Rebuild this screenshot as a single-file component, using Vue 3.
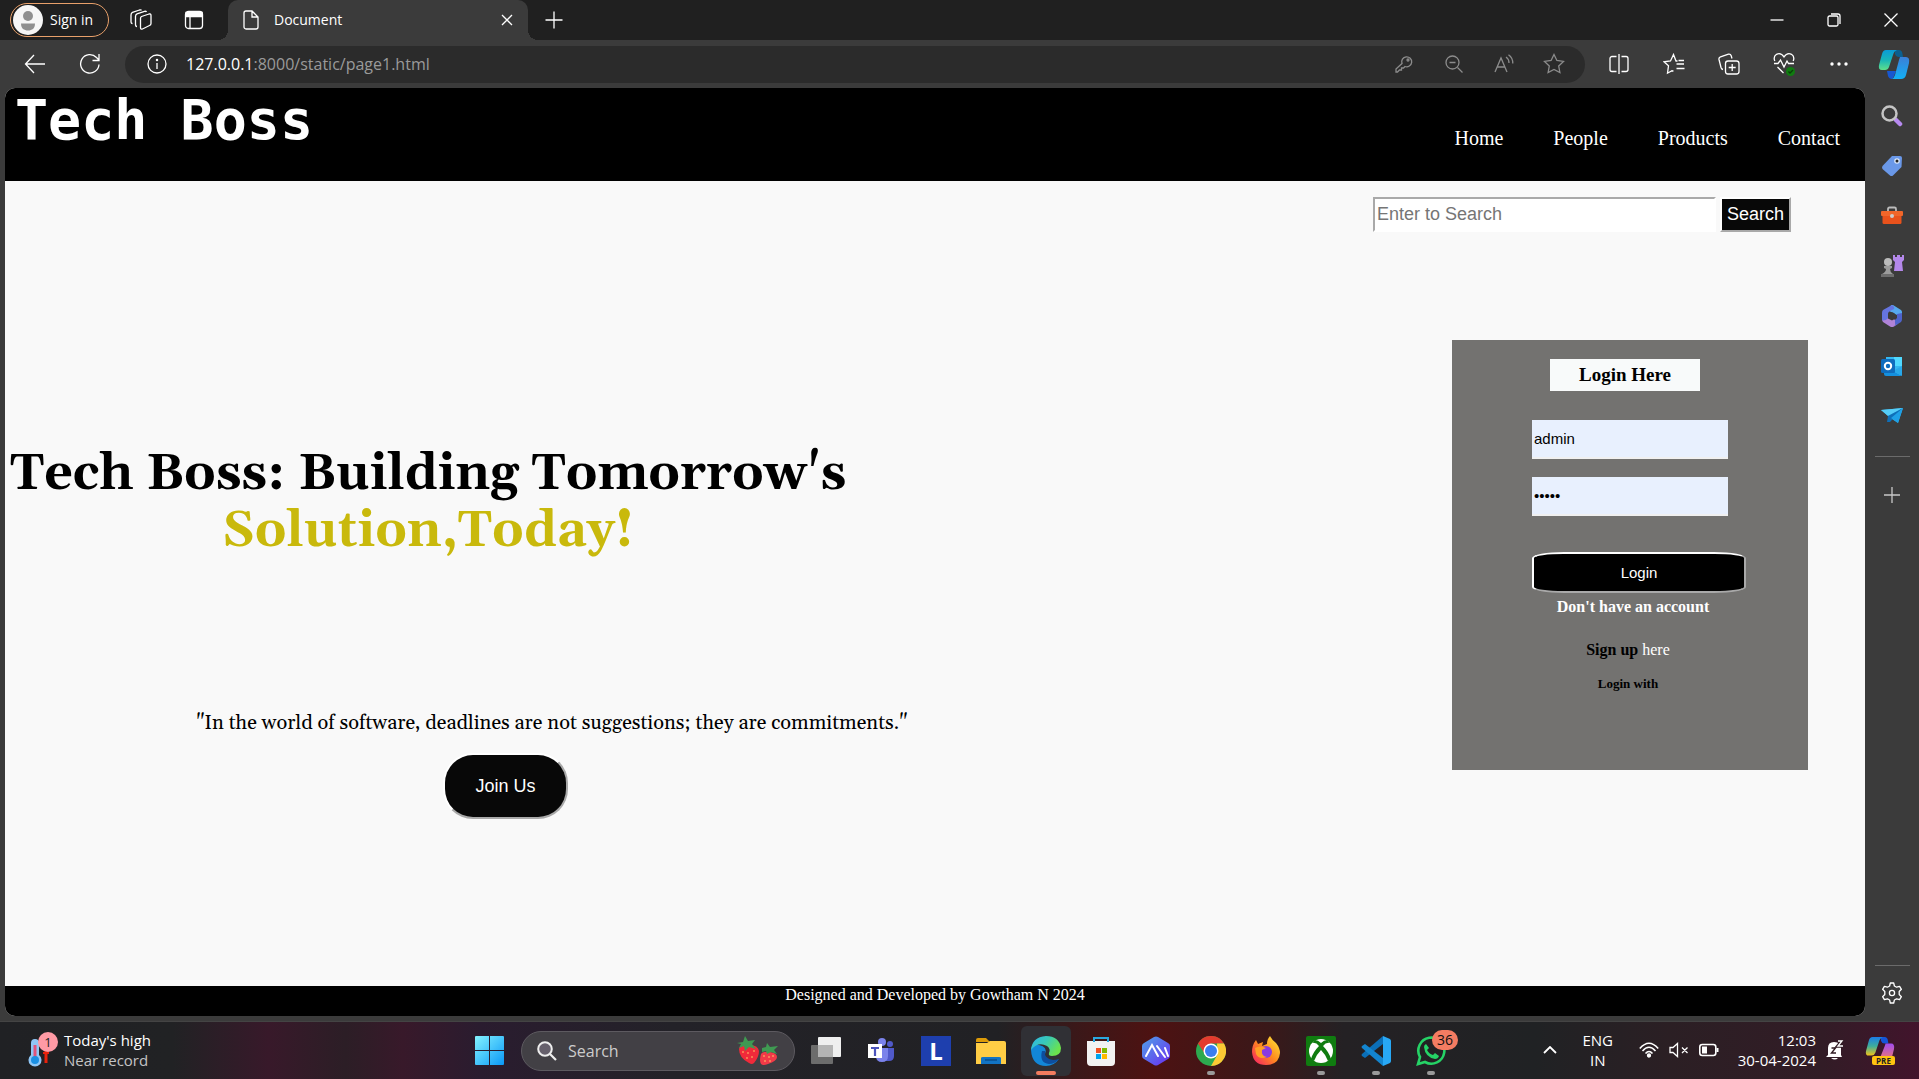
<script setup>
import { ref } from 'vue'

const query = ref('')
const username = ref('admin')
const password = ref('admin')
const links = ['Home', 'People', 'Products', 'Contact']
</script>

<template>
  <div class="desktop">
    <div class="tabstrip">
      <button class="profile" type="button">
        <svg width="30" height="30" viewBox="0 0 30 30"><circle cx="15" cy="15" r="15" fill="#f6f6f6" /><circle cx="15" cy="11" r="5" fill="#8f8f8f" /><path d="M8 18.500h14c0 5-3 7-7 7s-7-2-7-7z" fill="#8f8f8f" /></svg>
        <span>Sign in</span>
      </button>
      <button class="icon" type="button" aria-label="Workspaces">
        <svg width="22" height="22" viewBox="0 0 22 22" class="line"><path d="M11.500 7.500l7.500-2.500q2-.5 2 1.500v8q0 1.500-1.500 2l-7 3.500q-2 .8-2-1.500V9.500q0-1.500 1-2z" /><path d="M7 17.500q-1.500 0-1.500-2V7.500q0-2 1.500-2.700l7.500-2.500q1.500-.3 2 .7" /><path d="M2.500 14.500Q1 14.500 1 12.500V6Q1 4 2.500 3.300L9.500 1q1.500-.4 2 .4" /></svg>
      </button>
      <button class="icon" type="button" aria-label="Tab actions">
        <svg width="20" height="20" viewBox="0 0 20 20" class="line"><rect x="1.500" y="1.500" width="17" height="17" rx="3" /><path d="M2 2.500h16v4H2z" fill="#fff" /><path d="M6 6v12" /></svg>
      </button>
      <div class="tab">
        <svg width="16" height="20" viewBox="0 0 16 20" class="line"><path d="M1 3a2 2 0 0 1 2-2h6l6 6v10a2 2 0 0 1-2 2H3a2 2 0 0 1-2-2zM9 1v6h6" /></svg>
        <span class="tab-title">Document</span>
        <button class="close-tab" type="button" aria-label="Close tab">
          <svg width="12" height="12" viewBox="0 0 12 12" class="line"><path d="M1 1l10 10M11 1L1 11" /></svg>
        </button>
      </div>
      <button class="icon new-tab" type="button" aria-label="New tab">
        <svg width="18" height="18" viewBox="0 0 18 18" class="line"><path d="M9 .5v17M.5 9h17" /></svg>
      </button>
      <div class="window-buttons">
        <button type="button" aria-label="Minimize"><svg width="14" height="14" viewBox="0 0 14 14" class="line"><path d="M.5 7h13" /></svg></button>
        <button type="button" aria-label="Restore"><svg width="14" height="14" viewBox="0 0 14 14" class="line"><rect x="1" y="3" width="10" height="10" rx="1.500" /><path d="M4 1h7a2 2 0 0 1 2 2v8" /></svg></button>
        <button type="button" aria-label="Close"><svg width="14" height="14" viewBox="0 0 14 14" class="line"><path d="M.5 .5l13 13M13.500 .5l-13 13" /></svg></button>
      </div>
    </div>

    <div class="toolbar">
      <button class="icon" type="button" aria-label="Back">
        <svg width="22" height="20" viewBox="0 0 22 20" class="line"><path d="M21 10H2M10 1L1.500 10 10 19" /></svg>
      </button>
      <button class="icon reload" type="button" aria-label="Reload">
        <svg width="22" height="22" viewBox="0 0 22 22" class="line"><path d="M20 11.500A9.200 9.200 0 1 1 17.500 4.500L20 7M20 1v6.500h-6.500" /></svg>
      </button>
      <div class="address">
        <button class="icon" type="button" aria-label="Site information">
          <svg width="20" height="20" viewBox="0 0 20 20" class="line"><circle cx="10" cy="10" r="9" /><path d="M10 9v6" /><circle cx="10" cy="6" r=".6" fill="#fff" /></svg>
        </button>
        <span class="url"><b>127.0.0.1</b>:8000/static/page1.html</span>
        <div class="address-icons">
          <button class="icon" type="button" aria-label="Passwords"><svg width="18" height="18" viewBox="0 0 18 18" class="line"><path d="M7 8.500a5 5 0 1 1 3 3L8.500 13H6.500v2H4.500l-2 2H1v-3z" /><circle cx="13" cy="5" r="1" /></svg></button>
          <button class="icon" type="button" aria-label="Zoom out"><svg width="18" height="18" viewBox="0 0 18 18" class="line"><circle cx="7.500" cy="7.500" r="6.500" /><path d="M12.500 12.500l5 5M4.500 7.500h6" /></svg></button>
          <button class="icon" type="button" aria-label="Read aloud"><svg width="20" height="20" viewBox="0 0 20 20" class="line"><path d="M1 18L7 4l6 14M3.200 13h7.600M12 3q3 2 3 6M14.500 .8Q19 4 18.800 9.500" /></svg></button>
          <button class="icon" type="button" aria-label="Add to favorites"><svg width="22" height="22" viewBox="0 0 22 22" class="line"><path d="M11 1.500l2.900 6 6.600.9-4.800 4.600 1.200 6.500-5.900-3.100-5.900 3.100 1.200-6.500L1.500 8.400l6.600-.9z" /></svg></button>
        </div>
      </div>
      <div class="toolbar-icons">
        <button class="icon" type="button" aria-label="Split screen"><svg width="20" height="20" viewBox="0 0 20 20" class="line"><path d="M7.500 2.500H3a2 2 0 0 0-2 2v11a2 2 0 0 0 2 2h4.500M12.500 2.500H17a2 2 0 0 1 2 2v11a2 2 0 0 1-2 2h-4.500M10 0v20" /></svg></button>
        <button class="icon" type="button" aria-label="Favorites"><svg width="22" height="22" viewBox="0 0 22 22" class="line"><path d="M14.500 8h-1.500L10.500 1.500 7.500 8 1 8.800l4.500 4-1 7.400 4.500-2.400 1.500.4M13.500 11l7.500 0M15.500 7.500H21M13.500 15.500h8" /></svg></button>
        <button class="icon" type="button" aria-label="Collections"><svg width="22" height="22" viewBox="0 0 22 22" class="line"><rect x="7.500" y="8" width="13.500" height="13" rx="2.500" /><path d="M14.200 11v7M10.700 14.500h7M5 16.500q-1.500-.3-2-2L1 6.500q-.4-2 1.500-2.700L10.500 1.200q2-.4 2.700 1.500l.8 2.800" /></svg></button>
        <button class="icon" type="button" aria-label="Browser essentials"><svg width="22" height="24" viewBox="0 0 22 24" class="line"><path d="M1.800 9Q0 4.500 3.500 2.300 8 .3 11 5q3-4.700 7.500-2.700Q22 4.500 20.200 9M1 11.500h4L7.500 8l3.500 7 3-6 1.500 2.500H21M4.500 15l6 6" /><circle cx="17.500" cy="19.500" r="4.500" fill="#107c10" stroke="none" /><path d="M15.500 19.500l1.500 1.500 3-3" stroke="#093e09" /></svg></button>
        <button class="icon" type="button" aria-label="Settings and more"><svg width="18" height="6" viewBox="0 0 18 6" fill="#fff"><circle cx="2" cy="3" r="1.700" /><circle cx="9" cy="3" r="1.700" /><circle cx="16" cy="3" r="1.700" /></svg></button>
        <button class="icon" type="button" aria-label="Copilot">
          <svg width="32" height="30" viewBox="0 0 32 30">
            <defs>
              <linearGradient id="cop-a" x1="0" y1="0" x2="0" y2="1"><stop offset="0" stop-color="#0a9bd8" /><stop offset=".5" stop-color="#18b5b8" /><stop offset="1" stop-color="#5fe08a" /></linearGradient>
              <linearGradient id="cop-b" x1="0" y1="0" x2="0" y2="1"><stop offset="0" stop-color="#3c7fd6" /><stop offset="1" stop-color="#12b0f5" /></linearGradient>
            </defs>
            <path d="M17 1h4q3 0 3.500 4l.5 3h-4q-3 0-4-3z" fill="#0b5f8f" />
            <path d="M9 22h9l-2 5q-1 3-2 3-3 0-4-3z" fill="#1857d0" />
            <path d="M8 1h11q-3 1-4 5l-4 12q-1 3-4 3H4q-4 0-3-5L4 5q1-4 4-4z" fill="url(#cop-a)" />
            <path d="M22 8h6q4 0 3 6l-3 12q-1 4-5 4h-9q2-1 3-4l4-15z" fill="url(#cop-b)" />
          </svg>
        </button>
      </div>
    </div>

    <div class="browser">
      <div class="page">
        <header class="site-header">
          <h1>Tech Boss</h1>
          <nav>
            <a v-for="link in links" :key="link" href="#">{{ link }}</a>
          </nav>
        </header>
        <main>
          <form class="search" @submit.prevent>
            <input v-model="query" type="text" placeholder="Enter to Search" aria-label="Search">
            <button type="submit">Search</button>
          </form>
          <div class="content">
            <section class="hero">
              <h2>Tech Boss: Building Tomorrow's<br><span>Solution,Today!</span></h2>
              <p>"In the world of software, deadlines are not suggestions; they are commitments."</p>
              <button type="button">Join Us</button>
            </section>
            <form class="login" @submit.prevent>
              <h3>Login Here</h3>
              <div class="fields">
                <input v-model="username" type="text" aria-label="Username">
                <input v-model="password" type="password" aria-label="Password">
                <button type="submit">Login</button>
              </div>
              <p class="no-account">Don't have an account</p>
              <p class="signup"><b>Sign up</b> <a href="#">here</a></p>
              <p class="with">Login with</p>
            </form>
          </div>
        </main>
        <footer>Designed and Developed by Gowtham N 2024</footer>
      </div>

      <aside class="sidebar">
        <button type="button" aria-label="Search"><svg width="22" height="22" viewBox="0 0 22 22"><path d="M15 15l4 4" stroke="#b78af0" stroke-width="4.500" stroke-linecap="round" /><circle cx="8.500" cy="8.500" r="7" fill="none" stroke="#c4c4c4" stroke-width="2.500" /></svg></button>
        <button type="button" aria-label="Shopping"><svg width="22" height="22" viewBox="0 0 22 22"><path d="M11 1h8q2 0 2 2l-.5 9L12 20.500q-1.500 1-3 0L1.500 14q-1-1.500 0-3z" fill="#6a98e8" /><circle cx="16" cy="6" r="2.800" fill="#dbe8fb" /><circle cx="16" cy="6" r="1.500" fill="#222" /></svg></button>
        <button type="button" aria-label="Tools"><svg width="22" height="20" viewBox="0 0 22 20"><path d="M7 6V3q0-1.500 1.500-1.500h5Q15 1.500 15 3v3" fill="none" stroke="#bbb" stroke-width="1.800" /><rect x="1.500" y="8" width="19" height="10" rx="1.500" fill="#e8521c" /><rect y="5" width="22" height="5" rx="1" fill="#f0662a" /><circle cx="11" cy="10" r="2" fill="#ccc" /></svg></button>
        <button type="button" aria-label="Games"><svg width="24" height="24" viewBox="0 0 24 24"><path d="M13 1h2v2h2V1h3v2h2V1h2v5l-2 2 1 9h-9l1-9-2-2z" fill="#b488ea" /><circle cx="8" cy="8" r="4" fill="#bbb" /><path d="M4 12h8v2l-2 1q0 3 3 5v3H2v-3q4-2 4-5l-2-1z" fill="#9b9b9b" /><path d="M1 20h13v3H1z" fill="#6d6d6d" /></svg></button>
        <button type="button" aria-label="Microsoft 365"><svg width="22" height="22" viewBox="0 0 22 22"><path d="M10 0h2l8 5q1 1 1 2v7l-5-4-8-4z" fill="#56a9ee" /><path d="M11 0L2 5Q1 6 1 8v7q1 2 3 1l3-2V9q0-2 2-3l4-2q1-2-2-4z" fill="#6574e0" /><path d="M1 14q0 2 1 3l7 4.500q2 1 4 0l3-2q2-2 0-4l-8-3q-3 3-6 3-1 0-1-1.500z" fill="#b083d8" /><path d="M21 8v6q0 2-1 3l-7 4.500q2-1.500 1-4V15l2-2V9z" fill="#4f63cc" /><path d="M9 7q5 0 6 4v2l-4 2.500-4-2V9z" fill="#3b3b3b" /></svg></button>
        <button type="button" aria-label="Outlook"><svg width="22" height="22" viewBox="0 0 22 22"><path d="M5 2h16v18H5z" fill="#35b8f1" /><path d="M13 2h8v9h-8z" fill="#50d9ff" /><path d="M3 11l18 10H5q-2 0-2-2z" fill="#1490df" /><path d="M12 16l9-5v10z" fill="#28a8ea" /><rect y="4" width="14" height="14" rx="1.500" fill="#0f6cbd" /><circle cx="7" cy="11" r="3.200" fill="none" stroke="#fff" stroke-width="2" /></svg></button>
        <button type="button" aria-label="Drop"><svg width="22" height="18" viewBox="0 0 22 18"><path d="M0 3l22-2-5 15-6-4z" fill="#2bb3f0" /><path d="M0 3l22-2L7 9z" fill="#55cdf7" /><path d="M7 9l15-8L9 15H6z" fill="#0f6fb8" /><path d="M10 11L22 1l-5 15z" fill="#1ea0e6" /></svg></button>
        <hr>
        <button type="button" aria-label="Customize"><svg width="16" height="16" viewBox="0 0 16 16" class="line"><path d="M8 0v16M0 8h16" stroke="#c8c8c8" /></svg></button>
        <hr class="bottom">
        <button type="button" aria-label="Settings"><svg width="22" height="22" viewBox="0 0 22 22" class="line"><circle cx="11" cy="11" r="2.600" /><path d="M9.300 1h3.400l.7 3 2.200 1.200 3-.9 1.800 3-2.200 2.200v3l2.200 2.200-1.800 3-3-.9-2.200 1.200-.7 3H9.300l-.7-3-2.200-1.200-3 .9-1.800-3 2.200-2.200v-3L1.600 7.300l1.800-3 3 .9L8.600 4z" stroke-linejoin="round" /></svg></button>
      </aside>
    </div>

    <div class="taskbar">
      <button class="weather" type="button">
        <svg width="32" height="36" viewBox="0 0 32 36">
          <path d="M18 19v12" stroke="#e8220c" stroke-width="3" /><path d="M15 21h6" stroke="#e8220c" stroke-width="2" />
          <path d="M3 11a4 4 0 0 1 8 0v12a6.500 6.500 0 1 1-8 0z" fill="#8fc6f5" /><path d="M7 13v14" stroke="#e0527a" stroke-width="3" /><circle cx="7" cy="28" r="4" fill="#1a8fe3" />
          <circle cx="20" cy="10" r="10" fill="#ff9aa5" />
          <text x="20" y="15" font-size="13" text-anchor="middle" fill="#222">1</text>
        </svg>
        <span class="two-line">Today's high<br><i>Near record</i></span>
      </button>
      <div class="apps">
        <button class="start" type="button" aria-label="Start">
          <svg width="29" height="29" viewBox="0 0 29 29"><defs><linearGradient id="win" x1="0" y1="0" x2="1" y2="1"><stop offset="0" stop-color="#84f3ff" /><stop offset="1" stop-color="#0a98f7" /></linearGradient></defs><path d="M0 1q0-1 1-1h13v14H0zM15 0h13q1 0 1 1v13H15zM0 15h14v14H1q-1 0-1-1zM15 15h14v13q0 1-1 1H15z" fill="url(#win)" /></svg>
        </button>
        <button class="task-search" type="button">
          <svg width="20" height="20" viewBox="0 0 20 20"><circle cx="8" cy="8" r="6.800" fill="#66606c" stroke="#eee" stroke-width="2" /><path d="M13 13l6 6" stroke="#eee" stroke-width="2.200" /></svg>
          <span>Search</span>
          <svg class="berries" width="42" height="30" viewBox="0 0 42 30">
            <path d="M2 13q0-4 8-4 11-1 12 6 0 6-5 12-2 2-5 0Q2 22 2 13z" fill="#f02a3a" /><path d="M24 18q2-3 9-2 7 1 7 5 0 4-9 7-5 2-7 0-2-3 0-10z" fill="#f23a48" />
            <path d="M0 7l6-1 2-6 3 5 7-1-3 4 4 5-7-2-4 4-1-5-5 2 2-4zM25 12l4-1 1-4 3 4 8-1-4 4 3 4-6-2-4 2-1-3-4 1z" fill="#3f9a52" />
            <g fill="#ffd56a"><circle cx="6" cy="16" r=".8" /><circle cx="11" cy="17" r=".8" /><circle cx="17" cy="15" r=".8" /><circle cx="10" cy="22" r=".8" /><circle cx="15" cy="21" r=".8" /><circle cx="27" cy="20" r=".8" /><circle cx="32" cy="21" r=".8" /><circle cx="36" cy="20" r=".8" /><circle cx="28" cy="25" r=".8" /><circle cx="33" cy="25" r=".8" /></g>
          </svg>
        </button>
        <button class="app" type="button" aria-label="Task view"><svg width="30" height="30" viewBox="0 0 30 30"><rect y="9" width="22" height="19" rx="1" fill="#6c6c6c" /><rect x="7" y="1" width="23" height="20" rx="1" fill="#efefef" /><path d="M7 9h15v12H7z" fill="#b4b4b4" /></svg></button>
        <button class="app" type="button" aria-label="Teams"><svg width="30" height="30" viewBox="0 0 30 30"><circle cx="16" cy="6" r="4" fill="#7b83eb" /><circle cx="24" cy="8" r="3" fill="#5059c9" /><path d="M20 12h8v8q0 5-5 5h-3z" fill="#5059c9" /><path d="M10 12h12v8q0 6-6 6t-6-6z" fill="#7b83eb" /><rect x="2" y="8" width="14" height="14" fill="#fff" /><path d="M5 12h8M9 12v8" stroke="#4b53bc" stroke-width="2.200" /></svg></button>
        <button class="app" type="button" aria-label="L"><span class="letter">L</span></button>
        <button class="app" type="button" aria-label="File Explorer"><svg width="30" height="30" viewBox="0 0 30 30"><path d="M0 4q0-2 2-2h8l4 4H0z" fill="#dd9b08" /><path d="M0 7h11l3-2h14q2 0 2 2v21H0z" fill="#ffcd45" /><path d="M5 28v-6q0-1 2-1h16q2 0 2 1v6z" fill="#1274c4" /><path d="M9 24h12" stroke="#0a4f8e" stroke-width="1.500" /></svg></button>
        <button class="app active" type="button" aria-label="Edge">
          <svg width="30" height="30" viewBox="0 0 30 30">
            <defs><linearGradient id="edge-a" x1="0" y1="0" x2="1" y2=".5"><stop offset="0" stop-color="#2fb6e8" /><stop offset=".5" stop-color="#38c9b8" /><stop offset="1" stop-color="#6be34d" /></linearGradient></defs>
            <path d="M0 14Q1 6 8 9q9 2 6 9-2 5 5 8 5 1 9-3-5 7-13 7Q1 30 0 14z" fill="#1287d8" />
            <path d="M11 15q-3 12 7 13 6 0 10-5-3 1-6 1-9-1-8-9z" fill="#0d4e9e" />
            <path d="M0 14Q1 1 15 0q13 0 15 12 0 8-9 8-4 0-3-3 2-4-2-7Q7 5 0 14z" fill="url(#edge-a)" />
          </svg>
        </button>
        <button class="app" type="button" aria-label="Microsoft Store"><svg width="30" height="30" viewBox="0 0 30 30"><path d="M1 5h28v21q0 4-4 4H5q-4 0-4-4z" fill="#f2f2f2" /><path d="M8 6V2h14v4" fill="none" stroke="#2aa9e0" stroke-width="2" /><path d="M10 12h5v5h-5z" fill="#f25022" /><path d="M16 12h5v5h-5z" fill="#7fba00" /><path d="M10 18h5v5h-5z" fill="#00a4ef" /><path d="M16 18h5v5h-5z" fill="#ffb900" /></svg></button>
        <button class="app" type="button" aria-label="AI"><svg width="30" height="30" viewBox="0 0 30 30"><defs><linearGradient id="hex" x1="0" y1="0" x2="1" y2="1"><stop offset="0" stop-color="#4ea3e8" /><stop offset="1" stop-color="#6a2cf0" /></linearGradient></defs><path d="M13 1q2-1 4 0l10 6q2 1 2 3v10q0 2-2 3l-10 6q-2 1-4 0L3 23q-2-1-2-3V10q0-2 2-3z" fill="url(#hex)" /><path d="M5 20l6-11 6 11M16 10l8 11M24 12l3 8" fill="none" stroke="#fff" stroke-width="2" stroke-linecap="round" /></svg></button>
        <button class="app running" type="button" aria-label="Chrome"><svg width="30" height="30" viewBox="0 0 30 30"><circle cx="15" cy="15" r="15" fill="#2da94f" /><path d="M2 7.500A15 15 0 0 1 28 7.500H15L9 18z" fill="#e33b2e" /><path d="M28 7.500A15 15 0 0 1 15 30l6.500-11.500L21 7.500z" fill="#fcc934" /><circle cx="15" cy="15" r="7.500" fill="#fff" /><circle cx="15" cy="15" r="6" fill="#3a7df0" /></svg></button>
        <button class="app" type="button" aria-label="Firefox"><svg width="30" height="30" viewBox="0 0 30 30"><defs><linearGradient id="fox" x1="1" y1="0" x2="0" y2="1"><stop offset="0" stop-color="#fff13a" /><stop offset=".5" stop-color="#ff8a1e" /><stop offset="1" stop-color="#f5156c" /></linearGradient></defs><path d="M19 0q2 4 6 7 4 5 4 10-1 12-14 12T1 16q0-7 4-12l2 4 5-2-1 4 5-2q0-5 3-8z" fill="url(#fox)" /><circle cx="15" cy="16" r="6" fill="#8a3be0" /><path d="M4 12q5-3 11 0l-4 2q-1 6 5 7-8 3-11-3z" fill="#ffa025" /></svg></button>
        <button class="app running" type="button" aria-label="Xbox"><svg width="30" height="30" viewBox="0 0 30 30"><rect width="30" height="30" rx="2" fill="#107c10" /><circle cx="15" cy="15" r="12" fill="#fff" /><path d="M9 4q3 0 6 3 3-3 6-3l3 3q-4-1-7 3 6 6 8 13l-3 2q-2-6-7-11-5 5-7 11l-3-2q2-7 8-13-3-4-7-3z" fill="#107c10" /></svg></button>
        <button class="app running" type="button" aria-label="Visual Studio Code"><svg width="30" height="30" viewBox="0 0 30 30"><path d="M22 8L4 22l-3-2q-1-1 0-2L22 0z" fill="#0b6fb8" /><path d="M22 22L4 8l-3 2q-1 1 0 2l21 18z" fill="#1385cf" /><path d="M22 0l7 3q1 1 1 2v20q0 1-1 2l-7 3z" fill="#28a8f5" /></svg></button>
        <button class="app running" type="button" aria-label="WhatsApp, 36 unread">
          <svg width="30" height="30" viewBox="0 0 30 30"><path d="M2 28l2-7A13 13 0 1 1 9 26z" fill="none" stroke="#25d366" stroke-width="2.600" /><path d="M10 8l3 4-2 2q2 4 6 5l2-2 4 3q-1 3-4 3Q9 21 8 11q0-2 2-3z" fill="#25d366" /></svg>
          <span class="badge">36</span>
        </button>
      </div>
      <div class="tray">
        <button class="caret" type="button" aria-label="Show hidden icons"><svg width="14" height="8" viewBox="0 0 14 8" class="line"><path d="M1 7l6-6 6 6" stroke-width="1.800" /></svg></button>
        <button class="lang" type="button">ENG<br>IN</button>
        <button class="status" type="button" aria-label="Network, volume and battery">
          <svg width="20" height="16" viewBox="0 0 20 16" class="line"><path d="M.8 6.500Q10-4 19.200 6.500M3.500 9Q10 1.500 16.500 9M6.500 11.500q3.500-4 7 0" stroke-width="1.600" /><circle cx="10" cy="13.500" r="1.500" fill="#fff" /></svg>
          <svg width="20" height="16" viewBox="0 0 20 16" class="line"><path d="M1 5.500h3L8.500 1.500v13L4 10.500H1zM13 5.500l5.500 5.500M18.500 5.500L13 11" /></svg>
          <svg width="20" height="16" viewBox="0 0 20 16" class="line"><rect x=".8" y="2.500" width="16" height="11" rx="2.500" stroke-width="1.600" /><path d="M3 4.500h5v7H3z" fill="#fff" stroke="none" /><path d="M18.500 6v4" stroke-width="2" /></svg>
        </button>
        <button class="clock" type="button">12:03<br>30-04-2024</button>
        <button class="bell" type="button" aria-label="Notifications"><svg width="18" height="20" viewBox="0 0 18 20"><path d="M2 15V8q0-6 6-6 7 0 7 6v7l1 2H0zM5 18h7q-3 3-7 0z" fill="#fff" /><path d="M5.500 8h4l-4 5h4.500" fill="none" stroke="#321c24" stroke-width="1.400" /><path d="M12 1h4l-4 5h5" fill="none" stroke="#321c24" stroke-width="3.600" /><path d="M12 1h4l-4 5h5" fill="none" stroke="#fff" stroke-width="1.300" /></svg></button>
        <button class="copilot" type="button" aria-label="Copilot preview">
          <svg width="30" height="28" viewBox="0 0 32 30"><defs><linearGradient id="pre-a" x1="0" y1="0" x2="0" y2="1"><stop offset="0" stop-color="#1b7de8" /><stop offset=".5" stop-color="#3fae9a" /><stop offset="1" stop-color="#f2c318" /></linearGradient><linearGradient id="pre-b" x1="0" y1="0" x2="0" y2="1"><stop offset="0" stop-color="#a04bf0" /><stop offset="1" stop-color="#f47a6a" /></linearGradient></defs><path d="M17 1h4q3 0 3.500 4l.5 3h-4q-3 0-4-3z" fill="#1555d8" /><path d="M8 1h11q-3 1-4 5l-4 12q-1 3-4 3H4q-4 0-3-5L4 5q1-4 4-4z" fill="url(#pre-a)" /><path d="M22 8h6q4 0 3 6l-3 12H15l6-15z" fill="url(#pre-b)" /></svg>
          <span class="pre">PRE</span>
        </button>
      </div>
    </div>
  </div>
</template>

<style>
body { margin: 0; background: #3b3b3b; }
</style>

<style scoped>
* { box-sizing: border-box; }
.desktop {
  display: flex;
  flex-direction: column;
  min-height: 100vh;
  background: #3b3b3b;
  color: #fff;
  font-family: "Segoe UI", "Open Sans", "Noto Sans", sans-serif;
  font-size: 14px;
}
button { font: inherit; color: inherit; background: none; border: 0; padding: 0; }
svg { display: block; flex: none; }
.line { fill: none; stroke: #fff; stroke-width: 1.300; }
.icon { display: flex; align-items: center; justify-content: center; width: 40px; height: 36px; flex: none; }

.tabstrip { display: flex; align-items: center; height: 40px; background: #202020; padding-left: 10px; }
.profile { display: flex; align-items: center; gap: 7px; width: 99px; height: 34px; padding-left: 2px; margin-right: 12px; border: 1px solid #e8a06a; border-radius: 17px; }
.profile span, .tab-title { padding-bottom: 2px; }
.profile + .icon { margin-right: 13px; }
.tab { position: relative; display: flex; align-items: center; width: 300px; height: 40px; margin-left: 14px; padding: 0 15px; gap: 15px; background: #3b3b3b; border-radius: 10px 10px 0 0; }
.tab::before, .tab::after { content: ""; position: absolute; bottom: 0; width: 10px; height: 10px; }
.tab::before { right: 100%; background: radial-gradient(circle at 0 0, #202020 10px, #3b3b3b 10px); }
.tab::after { left: 100%; background: radial-gradient(circle at 100% 0, #202020 10px, #3b3b3b 10px); }
.tab-title { flex: 1; }
.new-tab { margin-left: 6px; }
.window-buttons { display: flex; margin-left: auto; }
.window-buttons button { display: flex; align-items: center; justify-content: center; width: 57px; height: 40px; }

.toolbar { display: flex; align-items: center; height: 48px; padding: 0 5px 0 15px; }
.reload { margin-left: 15px; }
.address { flex: 1; display: flex; align-items: center; height: 37px; margin: 0 14px 0 15px; padding: 0 11px 0 12px; border-radius: 19px; background: #2b2b2b; }
.url { margin-left: 9px; flex: 1; font-size: 16px; color: #9a9a9a; }
.url b { color: #fff; font-weight: 400; }
.address-icons { display: flex; gap: 10px; }
.address-icons .line { stroke: #8c8c8c; }
.toolbar-icons { display: flex; gap: 15px; }

.browser { flex: 1; display: flex; }
.page { flex: 1; display: flex; flex-direction: column; margin: 0 0 5px 5px; overflow: hidden; border-radius: 10px; background: #f9f9f9; color: #000; font-family: "Liberation Serif", serif; }
.site-header { display: flex; justify-content: space-between; height: 93px; padding: 0 25px 0 10px; background: #000; color: #fff; }
.site-header h1 { margin: 0; font: bold 55px/64px "DejaVu Sans Mono", monospace; }
nav { display: flex; gap: 50px; padding-top: 38px; font-size: 20px; line-height: 24px; }
nav a { color: #fff; text-decoration: none; }
main { flex: 1; }
.search { display: flex; justify-content: flex-end; gap: 4px; padding: 16px 74px 0 0; }
.search input { width: 343px; height: 35px; padding: 0 2px; border: 2px solid; border-color: #a9a9a9 #fff #fff #a9a9a9; border-radius: 0; background: #fff; font: 18px "Liberation Sans", sans-serif; }
.search input::placeholder { color: #757575; }
.search button { width: 71px; height: 35px; border: 2px solid; border-color: #fff #a9a9a9 #a9a9a9 #fff; background: #080808; color: #fff; font: 18px "Liberation Sans", sans-serif; }
.content { display: flex; justify-content: space-between; align-items: flex-start; padding: 108px 57px 60px 5px; }
.hero { display: flex; flex-direction: column; align-items: flex-start; padding-top: 106px; }
.hero h2 { margin: 0; font: bold 50px/57px Georgia, Gelasio, "Liberation Serif", serif; text-align: center; }
.hero h2 span { color: #c9b90c; }
.hero p { margin: 151px 0 18px 186px; font: 20px/24px Georgia, Gelasio, "Liberation Serif", serif; }
.hero button { margin-left: 433px; width: 125px; height: 66px; border: 2px solid; border-color: #fff #a9a9a9 #a9a9a9 #fff; border-radius: 30px; background: #080808; color: #fff; font: 18px "Liberation Sans", sans-serif; }
.login { display: flex; flex-direction: column; align-items: center; width: 356px; height: 430px; padding-top: 19px; background: #737270; }
.login h3 { width: 150px; margin: 0 10px 29px 0; background: #f8fafa; font-size: 19px; line-height: 32px; text-align: center; }
.fields { display: flex; flex-direction: column; gap: 18px; width: 196px; }
.fields input { height: 39px; padding: 0 2px; border: 0; border-bottom: 2px solid #f0f0f0; border-radius: 0; background: #e8f0fe; color: #000; font: 15px "Liberation Sans", sans-serif; }
.fields button { width: 214px; height: 41px; margin-top: 18px; border: 2px solid; border-color: #fff #a9a9a9 #a9a9a9 #fff; border-radius: 32px / 6px; background: #000; color: #fff; font: 15px "Liberation Sans", sans-serif; }
.login p { margin: 0 4px 0 0; font-size: 16px; line-height: 20px; }
.login .no-account { margin: 4px 0 23px 6px; color: #fff; font-weight: bold; }
.signup a { color: #fff; text-decoration: none; }
.login .with { margin-top: 14px; font-size: 13px; font-weight: bold; }
footer { height: 30px; background: #000; color: #fff; font-size: 16px; line-height: 18px; text-align: center; }

.sidebar { display: flex; flex-direction: column; align-items: center; gap: 20px; width: 54px; padding: 13px 0 13px; }
.sidebar button { display: flex; align-items: center; justify-content: center; width: 30px; height: 30px; }
.sidebar hr { width: 35px; height: 1px; margin: 5px 0 3px; border: 0; background: #6b6b6b; }
.sidebar .bottom { margin: auto 0 -8px; }

.taskbar {
  display: grid;
  grid-template-columns: 475px auto 1fr;
  align-items: center;
  height: 58px;
  border-top: 1px solid #444;
  background: linear-gradient(90deg, #202124 0%, #212224 9%, #38192a 14%, #2c1e26 18%, #38192a 21%, #2a1c2f 25%, #232228 35%, #212124 52%, #3a1819 56%, #4d1212 60%, #3a1819 66%, #242124 70%, #202224 80%, #2b1f24 87%, #321c26 95%, #42142c 100%);
}
.weather { display: flex; align-items: center; gap: 4px; width: 150px; margin-left: 28px; padding-bottom: 2px; font-size: 15px; text-align: left; white-space: nowrap; }
.two-line { line-height: 20px; }
.two-line i { font-style: normal; color: #c4c4c4; }
.apps { display: flex; align-items: center; }
.start { margin-right: 17px; }
.task-search { display: flex; align-items: center; width: 274px; height: 40px; margin-right: 6px; padding: 0 15px; border: 1px solid #5d5a60; border-radius: 20px; background: #424045; color: #ccc; font-size: 16px; }
.task-search span { margin-left: 11px; }
.berries { margin-left: auto; }
.app { position: relative; display: flex; align-items: center; justify-content: center; width: 50px; height: 50px; margin-right: 5px; border-radius: 6px; }
.app.active { background: #303035; }
.app.active::after, .app.running::after { content: ""; position: absolute; left: 21px; bottom: 1px; width: 8px; height: 4px; border-radius: 2px; background: #9a9a9a; }
.app.active::after { left: 15px; width: 20px; background: #f37c5f; }
.letter { width: 30px; height: 30px; background: #1e3fae; font: bold 24px/30px "Open Sans", sans-serif; text-align: center; }
.badge { position: absolute; top: 4px; right: -2px; width: 26px; height: 20px; border-radius: 10px; background: #f47c62; color: #111; font-size: 14px; line-height: 20px; text-align: center; }
.tray { display: flex; align-items: center; justify-content: flex-end; padding: 0 24px 2px 0; font-size: 15px; line-height: 20px; }
.lang { width: 50px; margin: 0 16px; }
.status { display: flex; gap: 10px; margin-right: 19px; }
.clock { text-align: right; }
.bell { margin: 0 21px 0 10px; }
.copilot { position: relative; width: 30px; height: 30px; }
.pre { position: absolute; right: 0; bottom: 0; width: 23px; height: 9px; border-radius: 2px; background: #ffc410; color: #222; font-size: 8px; font-weight: bold; line-height: 9px; }
</style>
